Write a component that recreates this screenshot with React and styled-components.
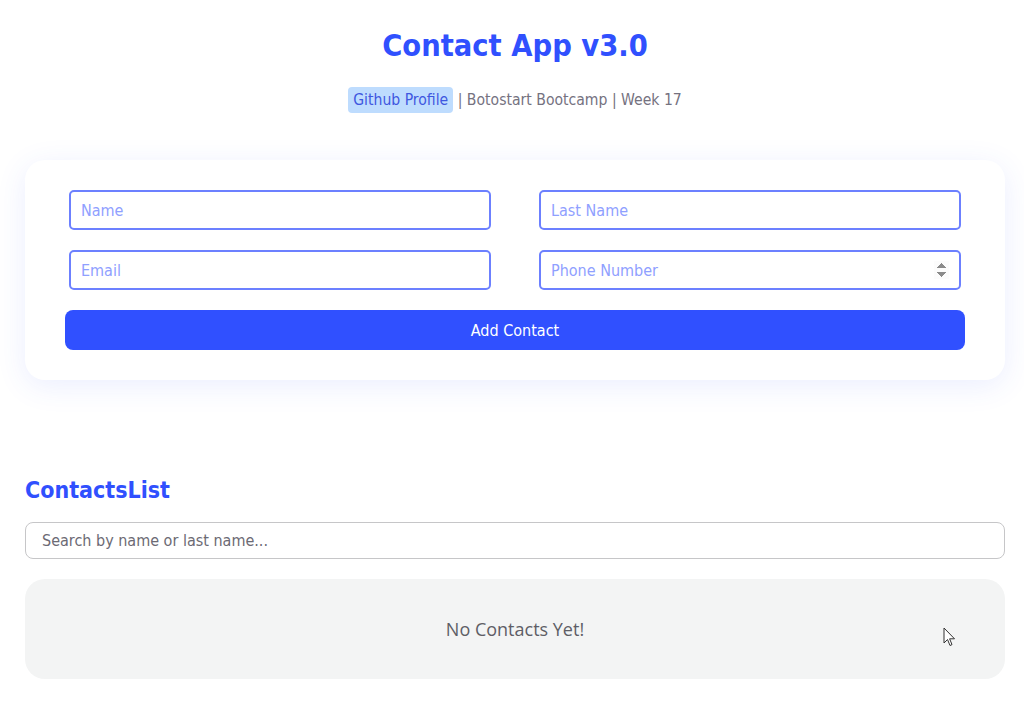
import React, { useState } from "react";
import styled, { createGlobalStyle } from "styled-components";

const GlobalStyle = createGlobalStyle`
  body {
    margin: 0;
    background: #fff;
    font-family: "DejaVu Sans Condensed", "DejaVu Sans", sans-serif;
  }
  * { box-sizing: border-box; }
`;

const Page = styled.div`
  position: relative;
  padding: 28px 19px 40px 25px;
`;

const Header = styled.header`
  display: flex;
  flex-direction: column;
  align-items: center;
`;

const Title = styled.h1`
  margin: 0;
  font-size: 30.5px;
  font-weight: 700;
  color: #3050fe;
  line-height: 36px;
`;

const Subtitle = styled.p`
  margin: 23px 0 0;
  font-size: 15.6px;
  color: #75727f;
  line-height: 26px;
`;

const Badge = styled.a`
  display: inline-block;
  padding: 0 5px;
  border-radius: 4px;
  background: #bedcfe;
  color: #3e57e0;
  text-decoration: none;
`;

const Card = styled.form`
  margin-top: 47px;
  padding: 30px 40px;
  background: #fff;
  border-radius: 20px;
  box-shadow: 0 6px 30px rgba(60, 90, 255, 0.1);
  display: flex;
  flex-direction: column;
  gap: 20px;
`;

const Grid = styled.div`
  display: grid;
  grid-template-columns: 1fr 1fr;
  column-gap: 48px;
  row-gap: 20px;
  padding: 0 4px;
`;

const Field = styled.input`
  height: 40px;
  width: 100%;
  padding: 0 10px;
  border: 2px solid #6c80ff;
  border-radius: 5px;
  font: inherit;
  font-size: 16px;
  color: #333;
  background: #fff;
  outline: none;
  &::placeholder {
    color: #8fa0ff;
  }
  &::-webkit-inner-spin-button {
    opacity: 1;
  }
`;

const Button = styled.button`
  height: 40px;
  border: none;
  border-radius: 8px;
  background: #3050ff;
  color: #fff;
  font: inherit;
  font-size: 16px;
  cursor: pointer;
`;

const ListSection = styled.section`
  margin-top: 96px;
  display: flex;
  flex-direction: column;
`;

const ListTitle = styled.h2`
  margin: 0;
  font-size: 23px;
  font-weight: 700;
  color: #3050fe;
  line-height: 28px;
`;

const Search = styled.input`
  margin-top: 18px;
  height: 37px;
  padding: 0 16px;
  border: 1px solid #c6c6c8;
  border-radius: 8px;
  font: inherit;
  font-size: 16px;
  outline: none;
  &::placeholder {
    color: #6c6a74;
  }
`;

const Empty = styled.div`
  margin-top: 20px;
  height: 100px;
  border-radius: 20px;
  background: #f3f4f4;
  display: flex;
  align-items: center;
  justify-content: center;
  font-family: "Open Sans", sans-serif;
  font-size: 18px;
  color: #5e5e66;
`;

const Cursor = styled.svg`
  position: absolute;
  left: 943px;
  top: 627px;
`;

export default function App() {
  const [search, setSearch] = useState("");

  return (
    <>
      <GlobalStyle />
      <Page>
        <Header>
          <Title>Contact App v3.0</Title>
          <Subtitle>
            <Badge href="#">Github Profile</Badge> | Botostart Bootcamp | Week 17
          </Subtitle>
        </Header>

        <Card onSubmit={(e) => e.preventDefault()}>
          <Grid>
            <Field placeholder="Name" />
            <Field placeholder="Last Name" />
            <Field placeholder="Email" />
            <Field type="number" placeholder="Phone Number" />
          </Grid>
          <Button type="submit">Add Contact</Button>
        </Card>

        <ListSection>
          <ListTitle>ContactsList</ListTitle>
          <Search
            placeholder="Search by name or last name..."
            value={search}
            onChange={(e) => setSearch(e.target.value)}
          />
          <Empty>No Contacts Yet!</Empty>
        </ListSection>

        <Cursor width="13" height="20" viewBox="0 0 13 20">
          <path
            d="M1 1 L1 16 L4.5 12.5 L7 18.5 L9 17.6 L6.6 11.8 L11.5 11.8 Z"
            fill="#fff"
            stroke="#333"
            strokeWidth="1"
            strokeLinejoin="round"
          />
        </Cursor>
      </Page>
    </>
  );
}
